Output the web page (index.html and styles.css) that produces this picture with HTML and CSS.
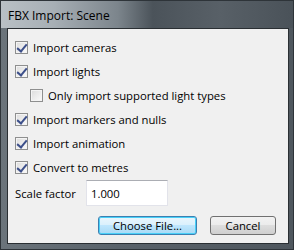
FILE: index.html
```html
<!DOCTYPE html>
<html lang="en">
<head>
    <meta charset="UTF-8">
    <title>FBX Import: Scene</title>
    <link rel="stylesheet" href="styles.css">
</head>
<body>

<div class="window">
    <div class="titlebar">FBX Import: Scene</div>

    <form class="content">
        <label class="check"><span class="box checked"></span>Import cameras</label>
        <label class="check"><span class="box checked"></span>Import lights</label>
        <label class="check indent"><span class="box"></span>Only import supported light types</label>
        <label class="check"><span class="box checked"></span>Import markers and nulls</label>
        <label class="check"><span class="box checked"></span>Import animation</label>
        <label class="check"><span class="box checked"></span>Convert to metres</label>

        <div class="scale">
            <label for="scale">Scale factor</label>
            <input type="text" id="scale" value="1.000">
        </div>

        <div class="buttons">
            <button type="button" class="default">Choose File...</button>
            <button type="button">Cancel</button>
        </div>
    </form>
</div>

</body>
</html>
```

FILE: styles.css
```css
* {
    box-sizing: border-box;
}

body {
    margin: 0;
    width: 294px;
    height: 250px;
    font-family: "Open Sans", "Noto Sans", Arial, sans-serif;
    font-size: 11.3px;
    color: #000;
}

.window {
    width: 294px;
    height: 250px;
    display: flex;
    flex-direction: column;
    padding: 0 4px 5px 6px;
    background: linear-gradient(90deg, #6b747b 0%, #59626a 40%, #4f575e 100%);
    border: 1px solid #2e3439;
}

.titlebar {
    height: 27px;
    margin: 0 -4px 0 -6px;
    padding: 6px 0 0 7px;
    font-size: 12px;
    color: #000;
    background: linear-gradient(90deg, #b9c0c5 0%, #a7afb5 18%, #7c858c 40%, #4b535a 52%, #586067 75%, #4a5259 100%);
}

.content {
    flex: 1;
    display: flex;
    flex-direction: column;
    padding: 6px 0 0 7px;
    background: #f0f0f0;
    border: 1px solid #2a2f33;
    margin: 0;
}

.check {
    display: flex;
    align-items: center;
    gap: 5px;
    height: 24px;
}

.indent {
    margin-left: 15px;
}

.box {
    width: 13px;
    height: 13px;
    border: 1px solid #8e8f8f;
    background: linear-gradient(135deg, #dcdcdc, #fbfbfb);
    box-shadow: inset 0 0 0 1px #f4f4f4;
    position: relative;
}

.box.checked::after {
    content: "";
    position: absolute;
    left: 3px;
    top: 0px;
    width: 4px;
    height: 8px;
    border: solid #3c4f8a;
    border-width: 0 2px 2px 0;
    transform: rotate(40deg);
}

.scale {
    display: flex;
    align-items: center;
    gap: 10px;
    height: 26px;
    margin-top: 1px;
}

.scale input {
    width: 82px;
    height: 26px;
    padding: 0 4px 0 4px;
    border: 1px solid #e2e3ea;
    border-top-color: #abadb3;
    background: #fff;
    font-family: inherit;
    font-size: 11.3px;
    color: #000;
}

.buttons {
    display: flex;
    justify-content: flex-end;
    gap: 13px;
    margin-top: 10px;
    padding-right: 12px;
}

button {
    height: 19px;
    padding: 0;
    border: 1px solid #707070;
    border-radius: 3px;
    background: linear-gradient(#f2f2f2 0%, #ebebeb 50%, #dddddd 50%, #cfcfcf 100%);
    font-family: inherit;
    font-size: 11.3px;
    color: #000;
    width: 66px;
}

button.default {
    width: 99px;
    border-color: #3c7fb1;
    box-shadow: inset 0 0 0 1px #48d0f8;
    background: linear-gradient(#eaf6fd 0%, #d9f0fc 50%, #bee6fd 50%, #a7d9f5 100%);
}
```
